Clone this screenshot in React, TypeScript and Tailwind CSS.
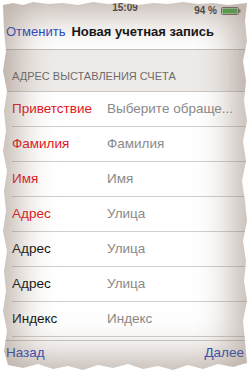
import React from "react"

const rows = [
  { label: "Приветствие", value: "Выберите обраще...", required: true },
  { label: "Фамилия", value: "Фамилия", required: true },
  { label: "Имя", value: "Имя", required: true },
  { label: "Адрес", value: "Улица", required: true },
  { label: "Адрес", value: "Улица", required: false },
  { label: "Адрес", value: "Улица", required: false },
  { label: "Индекс", value: "Индекс", required: false },
]

function Battery() {
  return (
    <svg width="20" height="8" viewBox="0 0 20 8">
      <rect x="0.5" y="0.5" width="17" height="7" rx="1" fill="none" stroke="#6b6b6b" />
      <rect x="1.5" y="1.5" width="15" height="5" fill="#3fb548" />
      <rect x="18" y="2.5" width="1.5" height="3" fill="#6b6b6b" />
    </svg>
  )
}

export default function App() {
  return (
    <div className="w-[250px] h-[375px] bg-white overflow-hidden font-['Liberation_Sans',Arial,sans-serif]">
      <div className="relative ml-[3px] mt-[1px] w-[244px] h-[369px] bg-white flex flex-col [clip-path:polygon(0px_4px,10px_2px,20px_4px,30px_1px,45px_3px,60px_2px,75px_4px,90px_1px,105px_3px,120px_2px,135px_4px,150px_2px,165px_3px,180px_1px,195px_3px,210px_2px,225px_4px,244px_2px,242px_20px,244px_40px,240px_60px,243px_80px,241px_100px,244px_120px,240px_140px,243px_160px,239px_180px,242px_200px,244px_220px,240px_240px,243px_260px,241px_280px,244px_300px,240px_320px,242px_340px,244px_362px,230px_366px,215px_363px,200px_368px,185px_364px,170px_369px,155px_365px,140px_368px,125px_363px,110px_367px,95px_364px,80px_369px,65px_365px,50px_368px,35px_363px,20px_367px,5px_364px,1px_350px,4px_330px,0px_310px,3px_290px,1px_270px,4px_250px,0px_230px,3px_210px,1px_190px,4px_170px,0px_150px,3px_130px,1px_110px,4px_90px,0px_70px,3px_50px,1px_30px)]">
        {/* status bar */}
        <div className="relative h-[13px] flex items-center justify-center text-[10px] font-bold text-[#3a3a3a]">
          <span>15:09</span>
          <div className="absolute right-[6px] top-[2px] flex items-center gap-[4px]">
            <span className="text-[10px] font-bold">94 %</span>
            <Battery />
          </div>
        </div>

        {/* nav bar */}
        <div className="h-[36px] flex items-center pl-[3px] border-b border-[#c4bfbb] text-[13px]">
          <span className="text-[#2447c9]">Отменить</span>
          <span className="ml-[6px] font-bold text-[#111]">Новая учетная запись</span>
        </div>

        {/* section header */}
        <div className="h-[42px] flex items-end pl-[9px] pb-[7px] bg-[#eeebe9] border-b border-[#ccc8c5] text-[11px] text-[#6d6b6a]">
          АДРЕС ВЫСТАВЛЕНИЯ СЧЕТА
        </div>

        {/* rows */}
        <div className="flex flex-col">
          {rows.map((r, i) => (
            <div key={i} className="ml-[9px] h-[35px] flex items-center border-b border-[#d2cecb] text-[13.5px]">
              <span className={"w-[95px] " + (r.required ? "text-[#e4151c]" : "text-[#111]")}>{r.label}</span>
              <span className="text-[#8b8988]">{r.value}</span>
            </div>
          ))}
        </div>

        {/* toolbar */}
        <div className="mt-[3px] flex-1 border-t border-[#ccc8c5] flex items-center justify-between pl-[3px] pr-[3px] pb-[4px] text-[13.5px] text-[#2447c9]">
          <span>Назад</span>
          <span>Далее</span>
        </div>

        <div className="pointer-events-none absolute inset-0 shadow-[inset_0_0_38px_12px_rgba(130,105,90,0.55)]" />
      </div>
    </div>
  )
}
